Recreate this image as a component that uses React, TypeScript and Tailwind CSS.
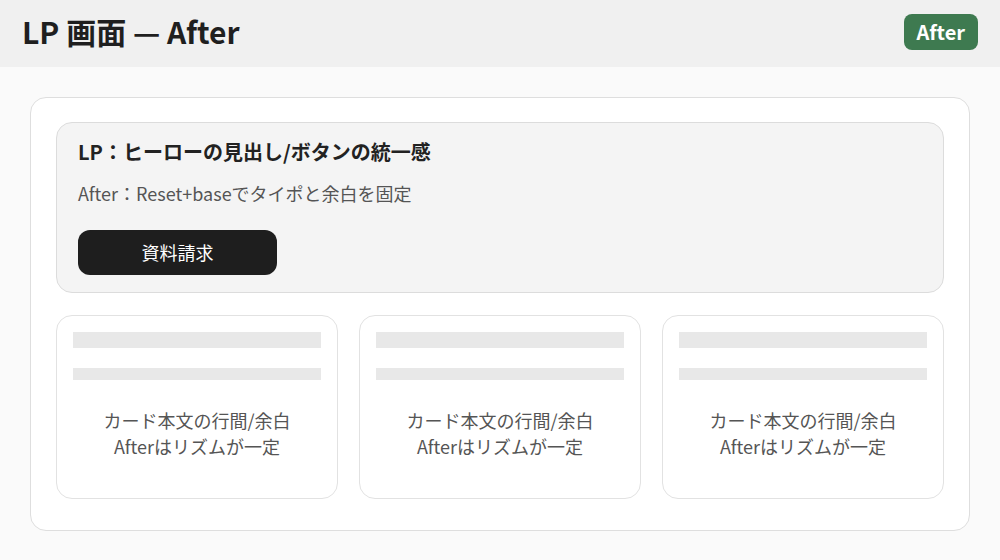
const cards = [0, 1, 2]

function Card() {
  return (
    <div className="h-[184px] rounded-2xl border border-[#e2e2e2] bg-white px-4 pt-4">
      <div className="h-4 bg-[#e8e8e8]" />
      <div className="mt-5 h-3 bg-[#e8e8e8]" />
      <p className="mt-[27px] text-center text-[18px] leading-[26px] text-[#555]">
        カード本文の行間/余白
        <br />
        Afterはリズムが一定
      </p>
    </div>
  )
}

export default function App() {
  return (
    <div
      className="min-h-[560px] bg-[#fafafa] text-[#222]"
      style={{ fontFamily: '"Noto Sans CJK JP", "Noto Sans", sans-serif' }}
    >
      <header className="flex h-[67px] items-center justify-between bg-[#f0f0f0] pb-[3px] pl-[22px] pr-[22px]">
        <h1 className="mb-[3px] text-[30px] font-bold leading-none text-[#1f1f1f]">LP 画面 — After</h1>
        <span className="flex h-[36px] items-center rounded-lg bg-[#3e7a50] px-[13px] text-[20px] font-bold text-white">
          After
        </span>
      </header>

      <main className="mx-[30px] mt-[30px] rounded-2xl border border-[#dedede] bg-white px-[25px] pt-[24px] pb-[31px]">
        <section className="rounded-2xl border border-[#dcdcdc] bg-[#f4f4f4] px-[21px] pt-4 pb-[17px]">
          <h2 className="text-[20px] font-bold leading-[26px] text-[#222]">
            LP：ヒーローの見出し/ボタンの統一感
          </h2>
          <p className="mt-[14px] text-[18px] leading-[28px] text-[#555]">
            After：Reset+baseでタイポと余白を固定
          </p>
          <button className="mt-[23px] h-[45px] w-[199px] rounded-xl bg-[#1e1e1e] text-[18px] text-white">
            資料請求
          </button>
        </section>

        <div className="mt-[22px] grid grid-cols-3 gap-[21px]">
          {cards.map((i) => (
            <Card key={i} />
          ))}
        </div>
      </main>
    </div>
  )
}
